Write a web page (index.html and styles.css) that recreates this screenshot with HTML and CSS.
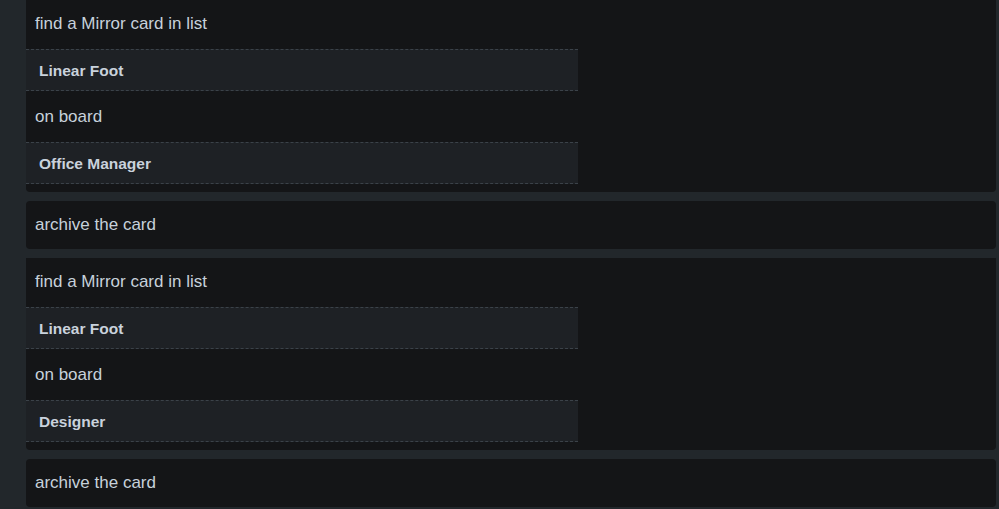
FILE: index.html
```html
<!DOCTYPE html>
<html lang="en">
<head>
<meta charset="utf-8">
<link rel="stylesheet" href="styles.css">
</head>
<body>
<div class="list">
  <div class="card">
    <div class="row">find a Mirror card in list</div>
    <div class="block">Linear Foot</div>
    <div class="row mid">on board</div>
    <div class="block">Office Manager</div>
  </div>
  <div class="card single">
    <div class="row">archive the card</div>
  </div>
  <div class="card">
    <div class="row">find a Mirror card in list</div>
    <div class="block">Linear Foot</div>
    <div class="row mid">on board</div>
    <div class="block">Designer</div>
  </div>
  <div class="card single">
    <div class="row">archive the card</div>
  </div>
</div>
</body>
</html>
```
FILE: styles.css
```css
html, body {
  margin: 0;
  padding: 0;
  background: #22272b;
  height: 100%;
  overflow: hidden;
}
body {
  font-family: "Liberation Sans", Arial, sans-serif;
  color: #c7d1db;
}
.list {
  display: flex;
  flex-direction: column;
  gap: 9px;
  margin: 0 3px 0 26px;
}
.card {
  background: #141517;
  border-radius: 0 0 4px 4px;
  padding-bottom: 8px;
}
.card.single {
  border-radius: 4px;
  padding-bottom: 0;
}
.row {
  height: 49px;
  box-sizing: border-box;
  padding: 14px 9px 0;
  font-size: 17px;
  line-height: 20px;
}
.card.single .row {
  height: 48px;
  padding-top: 14px;
}
.row.mid {
  height: 51px;
  padding-top: 16px;
}
.block {
  width: 552px;
  box-sizing: border-box;
  height: 42px;
  background: #1e2125;
  border-top: 1px dashed #3b4249;
  border-bottom: 1px dashed #3b4249;
  padding: 11px 13px 0;
  font-size: 15.5px;
  line-height: 20px;
  font-weight: bold;
  color: #c9d2dc;
}
```
